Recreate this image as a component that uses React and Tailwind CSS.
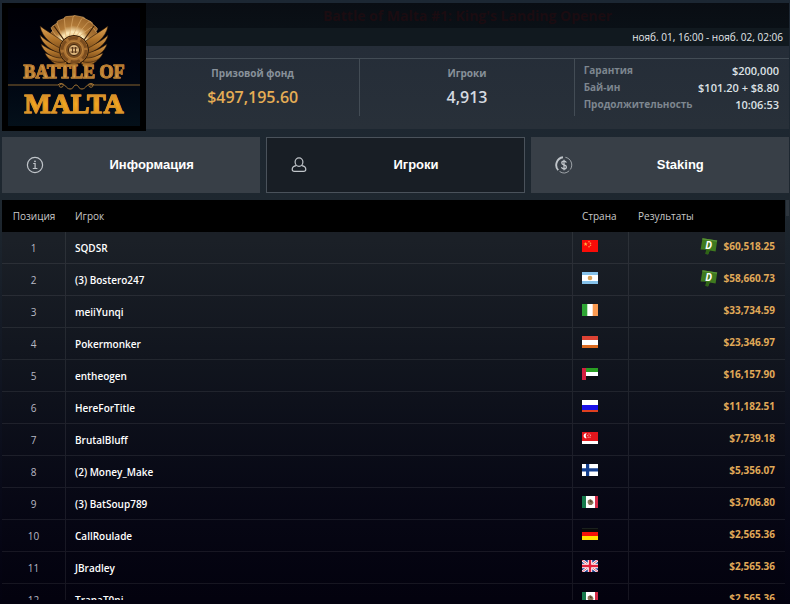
import clsx from "clsx";

const players = [
  { pos: 1, name: "SQDSR", flag: "cn", country: "China", prize: "$60,518.25", deal: true },
  { pos: 2, name: "(3) Bostero247", flag: "ar", country: "Argentina", prize: "$58,660.73", deal: true },
  { pos: 3, name: "meiiYunqi", flag: "ie", country: "Ireland", prize: "$33,734.59" },
  { pos: 4, name: "Pokermonker", flag: "at", country: "Austria", prize: "$23,346.97" },
  { pos: 5, name: "entheogen", flag: "ae", country: "UAE", prize: "$16,157.90" },
  { pos: 6, name: "HereForTitle", flag: "ru", country: "Russia", prize: "$11,182.51" },
  { pos: 7, name: "BrutalBluff", flag: "sg", country: "Singapore", prize: "$7,739.18" },
  { pos: 8, name: "(2) Money_Make", flag: "fi", country: "Finland", prize: "$5,356.07" },
  { pos: 9, name: "(3) BatSoup789", flag: "mx", country: "Mexico", prize: "$3,706.80" },
  { pos: 10, name: "CallRoulade", flag: "de", country: "Germany", prize: "$2,565.36" },
  { pos: 11, name: "JBradley", flag: "gb", country: "United Kingdom", prize: "$2,565.36" },
  { pos: 12, name: "TranaT0ni", flag: "mx", country: "Mexico", prize: "$2,565.36" },
];

const flags = {
  cn: (
    <>
      <rect width="16" height="12" fill="#fa0c08" />
      <path d="M3.6 2l.6 1.5h1.5L4.5 4.5l.5 1.6-1.4-1-1.3 1 .5-1.6-1.3-1H3z" fill="#ffb340" />
      <g fill="#ff9a50">
        <circle cx="7" cy="1.8" r=".8" />
        <circle cx="8.5" cy="3.2" r=".8" />
        <circle cx="8.5" cy="5.2" r=".8" />
        <circle cx="7" cy="6.8" r=".8" />
      </g>
    </>
  ),
  ar: (
    <>
      <rect width="16" height="12" fill="#85c1ea" />
      <rect y="3" width="16" height="6" fill="#fff" />
      <circle cx="8" cy="6" r="2.3" fill="#d6a25a" />
    </>
  ),
  ie: (
    <>
      <rect width="16" height="12" fill="#fff" />
      <rect width="5.3" height="12" fill="#2ea534" />
      <rect x="10.7" width="5.3" height="12" fill="#fb9a50" />
    </>
  ),
  at: (
    <>
      <rect width="16" height="12" fill="#fff" />
      <rect width="16" height="4" fill="#dc4234" />
      <rect y="9" width="16" height="3" fill="#dd6b20" />
    </>
  ),
  ae: (
    <>
      <rect width="16" height="4" fill="#2a9e23" />
      <rect y="4" width="16" height="4" fill="#fff" />
      <rect y="8" width="16" height="4" fill="#0c0f12" />
      <rect width="4" height="12" fill="#d3203f" />
    </>
  ),
  ru: (
    <>
      <rect width="16" height="5" fill="#fff" />
      <rect y="5" width="16" height="5" fill="#1a10e8" />
      <rect y="10" width="16" height="2" fill="#e04020" />
    </>
  ),
  sg: (
    <>
      <rect width="16" height="12" fill="#fff" />
      <rect width="16" height="9" fill="#e3161c" />
      <path d="M4.8 1.4a2.5 2.5 0 1 0 0 4.8 3.2 3.2 0 0 1 0-4.8z" fill="#fff" />
      <g fill="#ffb9b4">
        <circle cx="7" cy="1.9" r=".6" />
        <circle cx="8.5" cy="3.2" r=".6" />
        <circle cx="5.8" cy="3.4" r=".6" />
        <circle cx="6.2" cy="5.2" r=".6" />
        <circle cx="8" cy="5.2" r=".6" />
      </g>
    </>
  ),
  fi: (
    <>
      <rect width="16" height="12" fill="#fff" />
      <path d="M0 4.2h16v3.4H0zM4 0h3.2v12H4z" fill="#123d8c" />
    </>
  ),
  mx: (
    <>
      <rect width="16" height="12" fill="#fff" />
      <rect width="4" height="12" fill="#167a4c" />
      <rect x="13" width="3" height="12" fill="#d42a48" />
      <path d="M5.8 4.5l2.5-1.5 2.5 1.7.8 2.3-1.9 2H7L5.6 6.8z" fill="#8a7458" />
      <path d="M7.5 4l2 .8.4 1.6-1.6-.4z" fill="#4a3a28" />
    </>
  ),
  de: (
    <>
      <rect width="16" height="4" fill="#0a0a0a" />
      <rect width="16" height=".6" fill="#26302a" />
      <rect y="4" width="16" height="4" fill="#f31208" />
      <rect y="8" width="16" height="4" fill="#ffe000" />
    </>
  ),
  gb: (
    <>
      <rect width="16" height="12" fill="#21408f" />
      <path d="M0 0l16 12M16 0L0 12" stroke="#fff" strokeWidth="2.6" />
      <path d="M0 0l16 12M16 0L0 12" stroke="#e0203c" strokeWidth=".8" />
      <path d="M8 0v12M0 6h16" stroke="#fff" strokeWidth="4.4" />
      <path d="M8 0v12M0 6h16" stroke="#e0203c" strokeWidth="2.4" />
    </>
  ),
};

function Flag({ code, label }) {
  return (
    <svg viewBox="0 0 16 12" className="block h-3 w-4" role="img" aria-label={label}>
      {flags[code]}
    </svg>
  );
}

function DealBadge() {
  return (
    <span className="relative flex h-[18px] w-[18px] items-start justify-center">
      <svg viewBox="0 0 18 18" className="absolute inset-0 size-full" aria-hidden="true">
        <path d="M2.5 1.2l14.7 2.4-1.6 11-5.8-1-1.7 4-2.6-.6.7-4.3L.6 12.6z" fill="#3f7a1f" />
        <path d="M2.5 1.2l14.7 2.4-.3 1.2L2.2 2.6z" fill="#5a9436" />
        <path d="M6.2 12.6l3.6.7-1.7 4-2.6-.6z" fill="#2f6416" />
      </svg>
      <span className="relative pt-0.5 text-[10px] leading-3 font-bold text-white italic">D</span>
    </span>
  );
}

function InfoIcon() {
  return (
    <svg viewBox="0 0 18 18" className="size-[18px]" fill="none" stroke="currentColor" aria-hidden="true">
      <circle cx="9" cy="9" r="7.6" strokeWidth="1.2" />
      <path d="M7.2 7.5h1.9v4.8M6.8 12.5h4.6" strokeWidth="1.2" />
      <circle cx="9" cy="5.3" r=".9" fill="currentColor" stroke="none" />
    </svg>
  );
}

function PlayerIcon() {
  return (
    <svg viewBox="0 0 18 18" className="size-[18px]" fill="none" stroke="currentColor" strokeWidth="1.2" aria-hidden="true">
      <ellipse cx="9" cy="6.1" rx="3.9" ry="4.2" />
      <path d="M6.2 9.6c-2.4.5-4 1.7-4 3.6 0 1.5.8 2.1 2.2 2.1h9.2c1.4 0 2.2-.6 2.2-2.1 0-1.9-1.6-3.1-4-3.6" />
    </svg>
  );
}

function StakingIcon() {
  return (
    <svg viewBox="0 0 18 18" className="size-[18px]" fill="none" stroke="currentColor" aria-hidden="true">
      <path d="M3.2 14.2A7.8 7.8 0 0 1 8 1.3" strokeWidth="1.9" />
      <path d="M10.4 1.3a7.8 7.8 0 0 1 4.9 12.2M14.2 14.8a7.8 7.8 0 0 1-9.6.7" strokeWidth="1" opacity=".75" />
      <path d="M11.3 6.6c-.3-1-1.2-1.4-2.3-1.4-1.3 0-2.2.6-2.2 1.7 0 2.5 4.6 1.4 4.6 4 0 1.2-1 1.9-2.4 1.9-1.3 0-2.2-.6-2.5-1.7M9 3.8v10.4" strokeWidth="1.3" />
    </svg>
  );
}

const feathers = [
  "M28 49C20 52 14 49 11 44c6 2 10 1 15-1z",
  "M26 47C15 49 8 44 6 38c6 3 11 4 19 3z",
  "M25 43C13 44 4 37 2 29c7 5 13 8 22 8z",
  "M25 39C12 37 2 28 1 20c7 7 14 10 24 12z",
  "M26 35C14 31 3 23 1 11c8 6 16 10 25 17z",
];

const cards = [
  { angle: -50, height: 28 },
  { angle: -35, height: 31 },
  { angle: -20, height: 32 },
  { angle: -5, height: 33 },
  { angle: 11, height: 33 },
  { angle: 27, height: 32 },
  { angle: 41, height: 31 },
  { angle: 53, height: 28 },
];

function Emblem() {
  return (
    <svg viewBox="0 0 70 51" className="h-[51px] w-[70px]" aria-hidden="true">
      <defs>
        <linearGradient id="gold" x1="0" y1="0" x2="0" y2="1">
          <stop offset="0" stopColor="#e0a556" />
          <stop offset=".55" stopColor="#b0742b" />
          <stop offset="1" stopColor="#7d4e1c" />
        </linearGradient>
        <linearGradient id="card" x1="0" y1="0" x2="0" y2="1">
          <stop offset="0" stopColor="#9a652a" />
          <stop offset=".3" stopColor="#b17a38" />
          <stop offset=".5" stopColor="#fdeab8" />
          <stop offset="1" stopColor="#c58c42" />
        </linearGradient>
      </defs>
      {cards.map(({ angle, height }) => (
        <rect
          key={angle}
          x="28"
          y={34 - height}
          width="12"
          height={height}
          rx="2"
          fill="url(#card)"
          stroke="#dba968"
          strokeWidth=".6"
          transform={`rotate(${angle} 35 34)`}
        />
      ))}
      <path d="M25 25L15 11M45 25l10-14" stroke="#3a2009" strokeWidth="1.2" />
      <g fill="url(#gold)" stroke="#2c1806" strokeWidth=".6">
        {feathers.map((d) => <path key={d} d={d} />)}
        <g transform="matrix(-1 0 0 1 70 0)">
          {feathers.map((d) => <path key={d} d={d} />)}
        </g>
      </g>
      <circle cx="35" cy="35" r="14.5" fill="#a87032" stroke="#2c1806" />
      <circle cx="35" cy="35" r="12" fill="none" stroke="#7b4d1f" strokeWidth="3" strokeDasharray="9.6 3" />
      <circle cx="35" cy="35" r="8.5" fill="#7a4c1f" stroke="#c2893f" />
      <circle cx="35" cy="35" r="5.5" fill="#dcb47a" stroke="#3c230b" />
      <path d="M31.5 33h7M31.5 37h7M33.5 32v6M36.5 32v6" stroke="#59371a" strokeWidth="1" />
    </svg>
  );
}

function Logo() {
  return (
    <div className="w-36 shrink-0 bg-black px-1.5 py-[5px]">
      <div className="flex h-[118px] flex-col items-center bg-linear-to-b from-[#000006] to-[#04101a] pt-[7px] font-['Liberation_Serif',serif] font-bold">
        <Emblem />
        <div className="-mt-1 bg-linear-to-b from-[#e6ab55] via-[#c08232] to-[#f0c878] bg-clip-text text-lg leading-5 whitespace-nowrap text-transparent [-webkit-text-stroke:1px_#b5782c]">
          BATTLE OF
        </div>
        <svg viewBox="0 0 132 8" className="h-2 w-full" fill="none" stroke="#a87835" aria-hidden="true">
          <path d="M0 3h50M82 3h50" strokeWidth=".8" />
          <path d="M50 3c4-4 7 1 4 2s-4-2-1-3c4-1 5 5 9 5s3-4 6-4 2 4 6 4 5-6 9-5c3 1 2 4-1 3s0-6 4-2" strokeWidth="1" />
        </svg>
        <div className="bg-linear-to-b from-[#c97f2a] via-[#f3a81c] to-[#d98a20] bg-clip-text text-[28px] leading-7 text-transparent [-webkit-text-stroke:1px_#d9942c]">
          MALTA
        </div>
      </div>
    </div>
  );
}

function Stat({ label, value, gold }) {
  return (
    <div className="flex flex-col items-center border-r border-[#434c55] pt-1.5">
      <dt className="text-[10px] leading-4 font-bold text-[#88919a]">{label}</dt>
      <dd className={clsx("mt-1 text-base leading-6 font-semibold", gold ? "text-[#e5ad55]" : "text-[#d5dae0]")}>
        {value}
      </dd>
    </div>
  );
}

const details = [
  ["Гарантия", "$200,000"],
  ["Бай-ин", "$101.20 + $8.80"],
  ["Продолжительность", "10:06:53"],
];

function Header() {
  return (
    <header className="flex">
      <Logo />
      <div className="flex min-w-0 flex-1 flex-col">
        <h1 className="h-[25px] bg-linear-to-b from-[#090d13] to-[#0a1016] text-center text-sm leading-[25px] font-bold text-[#1b0c11]">
          Battle of Malta #1: King's Landing Opener
        </h1>
        <p className="h-[18px] bg-[#11191f] pr-1.5 text-right text-[10px] leading-[18px] text-[#e4e7ea]">
          нояб. 01, 16:00 - нояб. 02, 02:06
        </p>
        <div className="mb-0.5 flex-1 bg-linear-to-b from-[#252d38] to-[#283039] pt-3">
          <div className="grid h-[58px] grid-cols-3 border-t border-[#434c55]">
            <dl className="col-span-2 grid grid-cols-2">
              <Stat label="Призовой фонд" value="$497,195.60" gold />
              <Stat label="Игроки" value="4,913" />
            </dl>
            <dl className="pt-[3px] pr-2.5 pl-[9px]">
              {details.map(([label, value]) => (
                <div key={label} className="flex justify-between leading-[17px]">
                  <dt className="text-[10px] font-bold text-[#7d868f]">{label}</dt>
                  <dd className="text-[11px] font-semibold text-[#dde1e5]">{value}</dd>
                </div>
              ))}
            </dl>
          </div>
        </div>
      </div>
    </header>
  );
}

const tabs = [
  { label: "Информация", icon: InfoIcon },
  { label: "Игроки", icon: PlayerIcon, active: true },
  { label: "Staking", icon: StakingIcon },
];

function Tabs() {
  return (
    <nav className="mt-1.5 grid grid-cols-3 gap-1.5">
      {tabs.map(({ label, icon: Icon, active }) => (
        <button
          key={label}
          type="button"
          aria-pressed={!!active}
          className={clsx(
            "flex h-14 items-center border pl-[23px] font-['Liberation_Sans',sans-serif] text-[13px] font-bold text-white",
            active ? "border-[#4a525b] bg-[#181e25]" : "border-[#383f47] bg-[#383f47]"
          )}
        >
          <span className="text-[#c0c5ca]"><Icon /></span>
          <span className="flex-1">{label}</span>
        </button>
      ))}
    </nav>
  );
}

function PlayersTable() {
  return (
    <table className="w-full table-fixed border-separate border-spacing-0 text-[10px] leading-4">
      <colgroup>
        <col className="w-16" />
        <col />
        <col className="w-14" />
        <col className="w-[156px]" />
      </colgroup>
      <thead>
        <tr className="h-8 bg-black text-left text-[#c9c9c9]">
          <th className="p-0 text-center font-medium">Позиция</th>
          <th className="px-[9px] py-0 font-medium">Игрок</th>
          <th className="px-[9px] py-0 font-medium">Страна</th>
          <th className="px-[9px] py-0 font-medium">Результаты</th>
        </tr>
      </thead>
      <tbody>
        {players.map((p) => (
          <tr key={p.pos} className="h-8">
            <td className="border-r border-b border-white/8 p-0 text-center font-medium text-[#b9b9c4]">{p.pos}</td>
            <td className="border-r border-b border-white/8 px-[9px] py-0 font-semibold text-white">{p.name}</td>
            <td className="border-r border-b border-white/8 px-[9px] pt-0 pb-[3px]">
              <Flag code={p.flag} label={p.country} />
            </td>
            <td className="border-b border-white/8 pt-0 pr-2.5 pb-[3px] pl-[9px] font-bold text-[#e0a958]">
              <div className="flex items-center justify-end gap-1.5">
                {p.deal && <DealBadge />}
                {p.prize}
              </div>
            </td>
          </tr>
        ))}
      </tbody>
    </table>
  );
}

export default function App() {
  return (
    <main className="flex h-screen flex-col overflow-hidden bg-linear-to-b from-[#1c2733] via-[#1e272f] via-35% to-[#03020f] pt-[3px] pr-px pb-1 pl-0.5 font-['Open_Sans',sans-serif]">
      <Header />
      <Tabs />
      <section className="mt-[7px] flex min-h-0 flex-1">
        <div className="min-w-0 flex-1 overflow-hidden bg-linear-to-b from-[#1b2027] from-10% via-[#11151e] via-40% to-[#03020e]">
          <PlayersTable />
        </div>
        <div className="w-1 pl-px">
          <div className="h-4 bg-[#2d353d]" />
        </div>
      </section>
    </main>
  );
}
